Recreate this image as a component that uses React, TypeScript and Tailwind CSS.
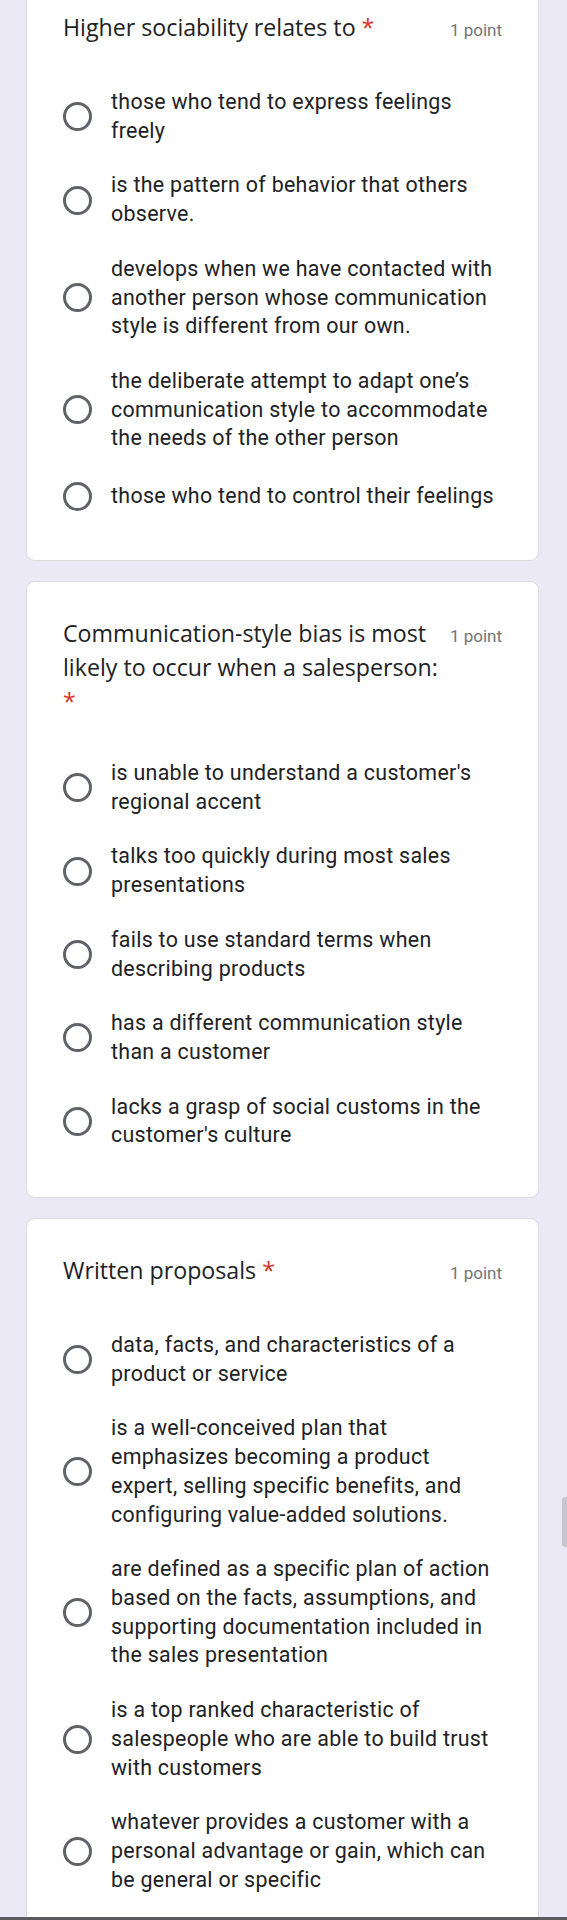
type Question = {
  id: string;
  title: string[];
  starOwnLine?: boolean;
  options: string[][];
};

const QUESTIONS: Question[] = [
  {
    id: "q1",
    title: ["Higher sociability relates to"],
    options: [
      ["those who tend to express feelings", "freely"],
      ["is the pattern of behavior that others", "observe."],
      [
        "develops when we have contacted with",
        "another person whose communication",
        "style is different from our own.",
      ],
      [
        "the deliberate attempt to adapt one’s",
        "communication style to accommodate",
        "the needs of the other person",
      ],
      ["those who tend to control their feelings"],
    ],
  },
  {
    id: "q2",
    title: ["Communication-style bias is most", "likely to occur when a salesperson:"],
    starOwnLine: true,
    options: [
      ["is unable to understand a customer's", "regional accent"],
      ["talks too quickly during most sales", "presentations"],
      ["fails to use standard terms when", "describing products"],
      ["has a different communication style", "than a customer"],
      ["lacks a grasp of social customs in the", "customer's culture"],
    ],
  },
  {
    id: "q3",
    title: ["Written proposals"],
    options: [
      ["data, facts, and characteristics of a", "product or service"],
      [
        "is a well-conceived plan that",
        "emphasizes becoming a product",
        "expert, selling specific benefits, and",
        "configuring value-added solutions.",
      ],
      [
        "are defined as a specific plan of action",
        "based on the facts, assumptions, and",
        "supporting documentation included in",
        "the sales presentation",
      ],
      [
        "is a top ranked characteristic of",
        "salespeople who are able to build trust",
        "with customers",
      ],
      [
        "whatever provides a customer with a",
        "personal advantage or gain, which can",
        "be general or specific",
      ],
    ],
  },
];

function Radio() {
  return <div className="h-[29px] w-[29px] shrink-0 rounded-full border-[3px] border-[#5f6368]" />;
}

function QuestionCard({ q, first }: { q: Question; first?: boolean }) {
  return (
    <div
      className={`rounded-[9px] border border-[#dadce0] bg-white px-[36px] pt-[34px] pb-[34px] ${
        first ? "-mt-[25px]" : ""
      }`}
    >
      <div className="flex items-baseline justify-between gap-3">
        <div className="font-['Open_Sans',sans-serif] text-[23.2px] leading-[34px] text-[#202124]">
          {q.title.map((line, i) => (
            <div key={i} className="whitespace-nowrap">
              {line}
              {!q.starOwnLine && i === q.title.length - 1 && (
                <span className="text-[#d93025]"> *</span>
              )}
            </div>
          ))}
          {q.starOwnLine && <div className="text-[#d93025]">*</div>}
        </div>
        <span className="shrink-0 font-['Roboto',sans-serif] text-[17px] leading-[34px] text-[#70757a]">
          1 point
        </span>
      </div>

      <div className="mt-[28px] flex flex-col">
        {q.options.map((lines, i) => (
          <div key={i} className="flex min-h-[60px] items-center gap-[19px] py-[13px]">
            <Radio />
            <div className="font-['Roboto',sans-serif] text-[21.4px] leading-[28.7px] tracking-[0.3px] text-[#202124]">
              {lines.map((l, j) => (
                <div key={j} className="whitespace-nowrap">
                  {l}
                </div>
              ))}
            </div>
          </div>
        ))}
      </div>
    </div>
  );
}

export default function App() {
  return (
    <div className="relative h-[1920px] w-[567px] overflow-hidden bg-[#ece9f6]">
      <div className="ml-[26px] flex w-[513px] flex-col gap-[20px]">
        {QUESTIONS.map((q, i) => (
          <QuestionCard key={q.id} q={q} first={i === 0} />
        ))}
      </div>

      {/* scroll indicator */}
      <div className="absolute right-0 top-[1497px] h-[50px] w-[5px] rounded-l-sm bg-[#c7c5cd]" />
      {/* nav bar edge */}
      <div className="absolute bottom-0 left-0 h-[3px] w-full bg-[#5b5b5f]" />
    </div>
  );
}
